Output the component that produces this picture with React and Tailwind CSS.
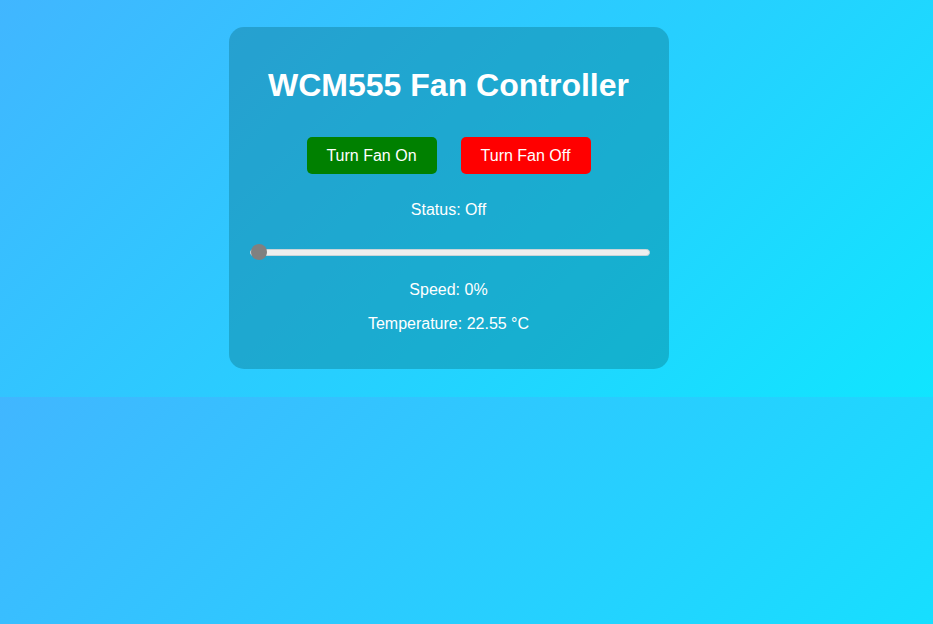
import React, { useState } from "react";

export default function App() {
  const [speed, setSpeed] = useState(0);
  const [status, setStatus] = useState("Off");

  return (
    <div className="min-h-[624px] w-full bg-[linear-gradient(135deg,#41b6ff,#10e5ff)] bg-[length:100%_397px] bg-repeat font-['Liberation_Sans',Arial,sans-serif] text-white">
      <div className="flex justify-center pt-[27px] pr-[36px] pb-[29px]">
        <div className="flex w-[440px] flex-col items-center rounded-[15px] bg-[rgba(0,90,100,0.3)] pt-[40px] pb-[36px]">
          <h1 className="text-[32px] font-bold leading-[37px]">WCM555 Fan Controller</h1>

          <div className="mt-[33px] flex gap-[24px]">
            <button
              onClick={() => setStatus("On")}
              className="flex h-[37px] w-[130px] items-center justify-center rounded-[5px] bg-[#008000] text-[16px] text-white"
            >
              Turn Fan On
            </button>
            <button
              onClick={() => setStatus("Off")}
              className="flex h-[37px] w-[130px] items-center justify-center rounded-[5px] bg-[#ff0000] text-[16px] text-white"
            >
              Turn Fan Off
            </button>
          </div>

          <p className="mt-[27px] text-[16px] leading-[18px]">Status: {status}</p>

          <div className="mt-[25px] ml-[2px] flex h-[16px] items-center">
            <input
              type="range"
              min="0"
              max="100"
              value={speed}
              onChange={(e) => setSpeed(e.target.value)}
              className="h-[7px] w-[400px] cursor-pointer appearance-none rounded-full border border-[#c8d4d8] bg-[#eeeeee] outline-none [&::-webkit-slider-thumb]:h-[16px] [&::-webkit-slider-thumb]:w-[16px] [&::-webkit-slider-thumb]:appearance-none [&::-webkit-slider-thumb]:rounded-full [&::-webkit-slider-thumb]:bg-[#808080]"
            />
          </div>

          <p className="mt-[21px] text-[16px] leading-[18px]">Speed: {speed}%</p>
          <p className="mt-[16px] text-[16px] leading-[18px]">Temperature: 22.55 °C</p>
        </div>
      </div>
    </div>
  );
}
